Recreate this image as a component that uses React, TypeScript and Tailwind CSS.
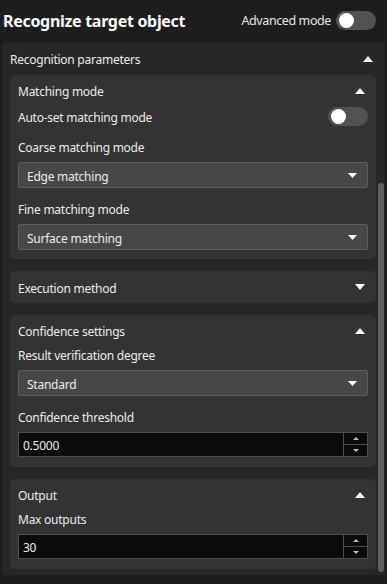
import React from "react";

const font = { fontFamily: "'Noto Sans', 'Open Sans', sans-serif" };

function Toggle() {
  return (
    <div className="w-[40px] h-[19px] rounded-full bg-[#525252] flex items-center pl-[3px] shrink-0">
      <div className="w-[15px] h-[15px] rounded-full bg-white" />
    </div>
  );
}

function Caret({ up = false, small = false }: { up?: boolean; small?: boolean }) {
  const w = small ? 9 : 10;
  const h = small ? 5 : 6;
  return (
    <svg width={w} height={h} viewBox={`0 0 ${w} ${h}`} className="shrink-0">
      {up ? (
        <polygon points={`0,${h} ${w / 2},0 ${w},${h}`} fill="#ffffff" />
      ) : (
        <polygon points={`0,0 ${w},0 ${w / 2},${h}`} fill="#ffffff" />
      )}
    </svg>
  );
}

// Noto Sans sits a bit high in its box, nudge text down
function Txt({ children }: { children: React.ReactNode }) {
  return <span className="pt-[3px]">{children}</span>;
}

function Select({ value }: { value: string }) {
  return (
    <div className="h-[26px] mt-[8px] flex items-center justify-between bg-[#474747] border border-[#5e5e5e] rounded-[2px] pl-[8px] pr-[10px] text-[#ececec]">
      <Txt>{value}</Txt>
      <Caret small />
    </div>
  );
}

function SpinBox({ value }: { value: string }) {
  return (
    <div className="h-[25px] mt-[8px] flex">
      <div className="flex-1 flex items-center bg-[#0b0b0b] border border-[#4e4e4e] pl-[4px] text-[#ececec]">
        <Txt>{value}</Txt>
      </div>
      <div className="w-[24px] flex flex-col">
        <div className="flex-1 flex items-center justify-center bg-[#0b0b0b] border border-l-0 border-[#4e4e4e]">
          <svg width="6" height="3" viewBox="0 0 6 3"><polygon points="0,3 3,0 6,3" fill="#bdbdbd" /></svg>
        </div>
        <div className="flex-1 flex items-center justify-center bg-[#0b0b0b] border border-l-0 border-t-0 border-[#4e4e4e]">
          <svg width="6" height="3" viewBox="0 0 6 3"><polygon points="0,0 6,0 3,3" fill="#bdbdbd" /></svg>
        </div>
      </div>
    </div>
  );
}

function Label({ text, first = false }: { text: string; first?: boolean }) {
  return (
    <div className={`h-[16px] flex items-center ${first ? "" : "mt-[12px]"}`}>
      <Txt>{text}</Txt>
    </div>
  );
}

function Card({ title, open = true, children }: { title: string; open?: boolean; children?: React.ReactNode }) {
  return (
    <div className={`bg-[#333333] rounded-[5px] px-[8px] ${open ? "pb-[9px]" : ""}`}>
      <div className={`${open ? "h-[31px]" : "h-[32px]"} flex items-center justify-between pr-[3px]`}>
        <Txt>{title}</Txt>
        <Caret up={open} />
      </div>
      {children}
    </div>
  );
}

export default function App() {
  return (
    <div className="w-[387px] h-[584px] bg-[#1d1d1d] text-[#ececec] text-[12px] tracking-[-0.25px] overflow-hidden" style={font}>
      <div className="h-[40px] flex items-center justify-between pl-[3px] pr-[11px]">
        <h1 className="text-[16px] font-bold text-white tracking-[-0.3px] pt-[2px]">Recognize target object</h1>
        <div className="flex items-center gap-[5px]">
          <span className="text-[12.5px] text-[#e6e6e6] tracking-[-0.4px] pt-[2px]">Advanced mode</span>
          <Toggle />
        </div>
      </div>
      <div className="mt-[2px] mx-[2px] h-[533px] bg-[#272727] rounded-[4px] flex flex-col overflow-hidden">
        <div className="h-[33px] shrink-0 flex items-center justify-between pl-[8px] pr-[12px]">
          <Txt>Recognition parameters</Txt>
          <Caret up />
        </div>
        <div className="flex pl-[8px] pr-[1px] gap-[2px]">
          <div className="w-[366px] flex flex-col gap-[12px] pb-[6px]">
            <Card title="Matching mode">
              <div className="h-[20px] flex items-center justify-between">
                <Txt>Auto-set matching mode</Txt>
                <Toggle />
              </div>
              <div className="mt-[12px]">
                <Label text="Coarse matching mode" first />
              </div>
              <Select value="Edge matching" />
              <Label text="Fine matching mode" />
              <Select value="Surface matching" />
            </Card>
            <Card title="Execution method" open={false} />
            <Card title="Confidence settings">
              <Label text="Result verification degree" first />
              <Select value="Standard" />
              <Label text="Confidence threshold" />
              <SpinBox value="0.5000" />
              <div className="h-[1px]" />
            </Card>
            <Card title="Output">
              <Label text="Max outputs" first />
              <SpinBox value="30" />
              <div className="h-[1px]" />
            </Card>
          </div>
          <div className="w-[6px] flex flex-col">
            <div className="h-[108px] shrink-0" />
            <div className="h-[389px] rounded-[3px] bg-[#5f5f5f]" />
          </div>
        </div>
      </div>
    </div>
  );
}
